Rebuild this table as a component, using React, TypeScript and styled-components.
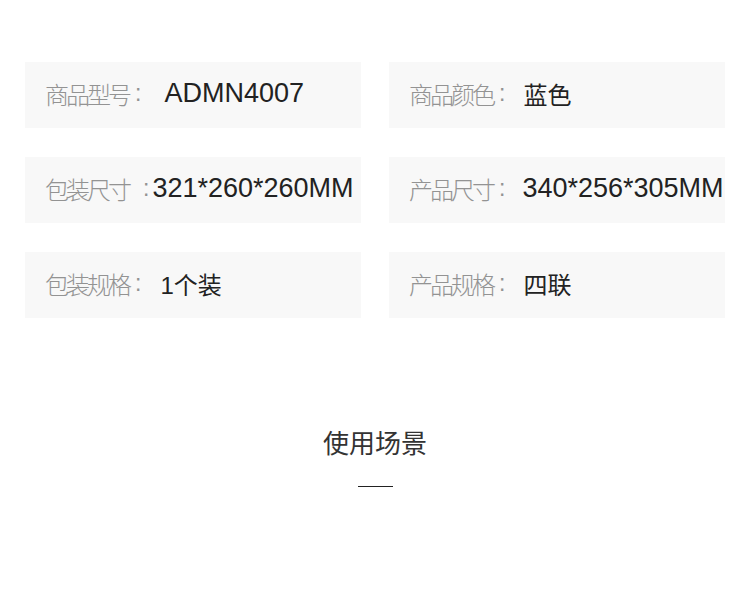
import styled, { createGlobalStyle } from "styled-components";

const specs = [
  { label: "商品型号", value: "ADMN4007", colon: 6, gap: 23, size: 27 },
  { label: "商品颜色", value: "蓝色", colon: 6, gap: 18, size: 24 },
  { label: "包装尺寸", value: "321*260*260MM", colon: 14, gap: 3, size: 27 },
  { label: "产品尺寸", value: "340*256*305MM", colon: 6, gap: 17, size: 27 },
  { label: "包装规格", value: "1个装", colon: 6, gap: 19, size: 24 },
  { label: "产品规格", value: "四联", colon: 6, gap: 18, size: 24 },
];

export default function App() {
  return (
    <>
      <GlobalStyle />
      <Page>
        <SpecGrid>
          {specs.map((s) => (
            <SpecCell key={s.label}>
              <Label>{s.label}</Label>
              <Colon $offset={s.colon}>:</Colon>
              <Value $gap={s.gap} $size={s.size}>
                {s.value}
              </Value>
            </SpecCell>
          ))}
        </SpecGrid>
        <Section>
          <SectionTitle>使用场景</SectionTitle>
          <Rule />
        </Section>
      </Page>
    </>
  );
}

const GlobalStyle = createGlobalStyle`
  body {
    margin: 0;
    background: #fff;
    font-family: "Liberation Sans", "Noto Sans CJK SC", sans-serif;
  }
`;

const Page = styled.div`
  width: 750px;
  height: 593px;
  padding: 62px 0 0 25px;
  box-sizing: border-box;
`;

const SpecGrid = styled.div`
  display: grid;
  grid-template-columns: 336px 336px;
  column-gap: 28px;
  row-gap: 29px;
`;

const SpecCell = styled.div`
  height: 66px;
  background: #f8f8f8;
  display: flex;
  align-items: center;
  padding: 0 0 3px 20px;
  box-sizing: border-box;
  white-space: nowrap;
`;

const Label = styled.span`
  font-family: "Noto Sans CJK SC", sans-serif;
  font-size: 24px;
  font-weight: 300;
  letter-spacing: -3px;
  color: #939393;
`;

const Colon = styled.span<{ $offset: number }>`
  font-family: "Liberation Sans", sans-serif;
  font-size: 23px;
  color: #939393;
  margin-left: ${(p) => p.$offset}px;
`;

const Value = styled.span<{ $gap: number; $size: number }>`
  font-size: ${(p) => p.$size}px;
  color: #222;
  margin-left: ${(p) => p.$gap}px;
  font-family: "Liberation Sans", "Noto Sans CJK SC", sans-serif;
`;

const Section = styled.div`
  display: flex;
  flex-direction: column;
  align-items: center;
  padding-top: 106px;
  margin-left: -25px;
`;

const SectionTitle = styled.div`
  font-family: "Noto Sans CJK SC", sans-serif;
  font-size: 26px;
  color: #333;
  line-height: 36px;
`;

const Rule = styled.div`
  width: 35px;
  height: 1px;
  background: #222;
  margin-top: 26px;
`;
